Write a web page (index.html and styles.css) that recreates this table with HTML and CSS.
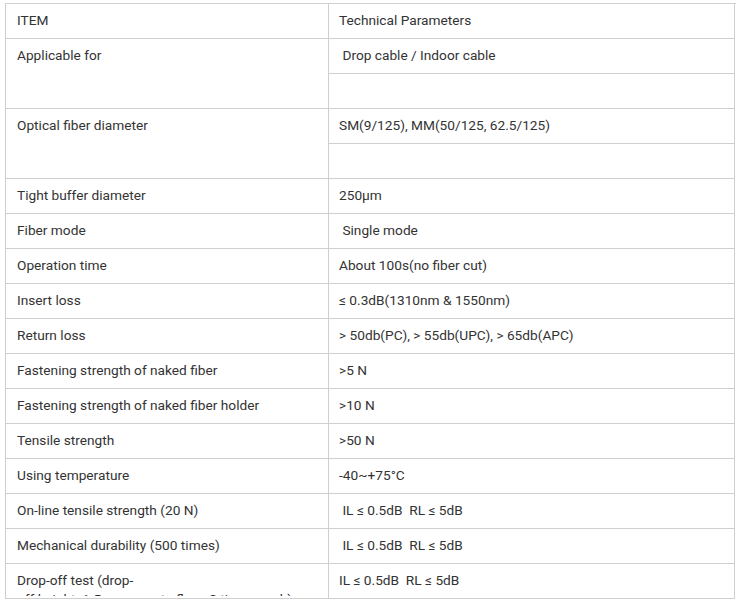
FILE: index.html
```html
<!DOCTYPE html>
<html>
<head>
<meta charset="utf-8">
<link rel="stylesheet" href="styles.css">
</head>
<body>
<div class="spec">
  <div class="cell l">ITEM</div>
  <div class="cell r">Technical Parameters</div>

  <div class="cell l span2">Applicable for</div>
  <div class="cell r">&nbsp;Drop cable / Indoor cable</div>
  <div class="cell r"></div>

  <div class="cell l span2">Optical fiber diameter</div>
  <div class="cell r">SM(9/125), MM(50/125, 62.5/125)</div>
  <div class="cell r"></div>

  <div class="cell l">Tight buffer diameter</div>
  <div class="cell r">250μm</div>

  <div class="cell l">Fiber mode</div>
  <div class="cell r">&nbsp;Single mode</div>

  <div class="cell l">Operation time</div>
  <div class="cell r">About 100s(no fiber cut)</div>

  <div class="cell l">Insert loss</div>
  <div class="cell r">≤ 0.3dB(1310nm &amp; 1550nm)</div>

  <div class="cell l">Return loss</div>
  <div class="cell r">&gt; 50db(PC), &gt; 55db(UPC), &gt; 65db(APC)</div>

  <div class="cell l">Fastening strength of naked fiber</div>
  <div class="cell r">&gt;5 N</div>

  <div class="cell l">Fastening strength of naked fiber holder</div>
  <div class="cell r">&gt;10 N</div>

  <div class="cell l">Tensile strength</div>
  <div class="cell r">&gt;50 N</div>

  <div class="cell l">Using temperature</div>
  <div class="cell r">-40~+75°C</div>

  <div class="cell l">On-line tensile strength (20 N)</div>
  <div class="cell r">&nbsp;IL ≤ 0.5dB&nbsp; RL ≤ 5dB</div>

  <div class="cell l">Mechanical durability (500 times)</div>
  <div class="cell r">&nbsp;IL ≤ 0.5dB&nbsp; RL ≤ 5dB</div>

  <div class="cell l"><div class="clip">Drop-off test (drop-<br>off height: 1.5m, concrete floor, 3 times each)</div></div>
  <div class="cell r">IL ≤ 0.5dB&nbsp; RL ≤ 5dB</div>
</div>
</body>
</html>
```
FILE: styles.css
```css
html, body {
  margin: 0;
  padding: 0;
  background: #fff;
}
body {
  padding: 3px 5px;
  font-family: Roboto, "Liberation Sans", Arial, sans-serif;
  font-size: 13.7px;
  line-height: 19px;
  color: #333;
}
.spec {
  display: grid;
  grid-template-columns: 323px 406px;
  grid-auto-rows: 35px;
  width: 730px;
  border-top: 1px solid #cfcfcf;
  border-left: 1px solid #cfcfcf;
}
.cell {
  box-sizing: border-box;
  border-right: 1px solid #cfcfcf;
  border-bottom: 1px solid #cfcfcf;
  padding-top: 6.5px;
  overflow: hidden;
  white-space: pre-wrap;
}
.clip {
  height: 25.5px;
  overflow: hidden;
}
.l {
  grid-column: 1;
  padding-left: 11px;
  padding-right: 11px;
}
.r {
  grid-column: 2;
  padding-left: 10px;
  padding-right: 10px;
}
.span2 {
  grid-row: span 2;
}
```
